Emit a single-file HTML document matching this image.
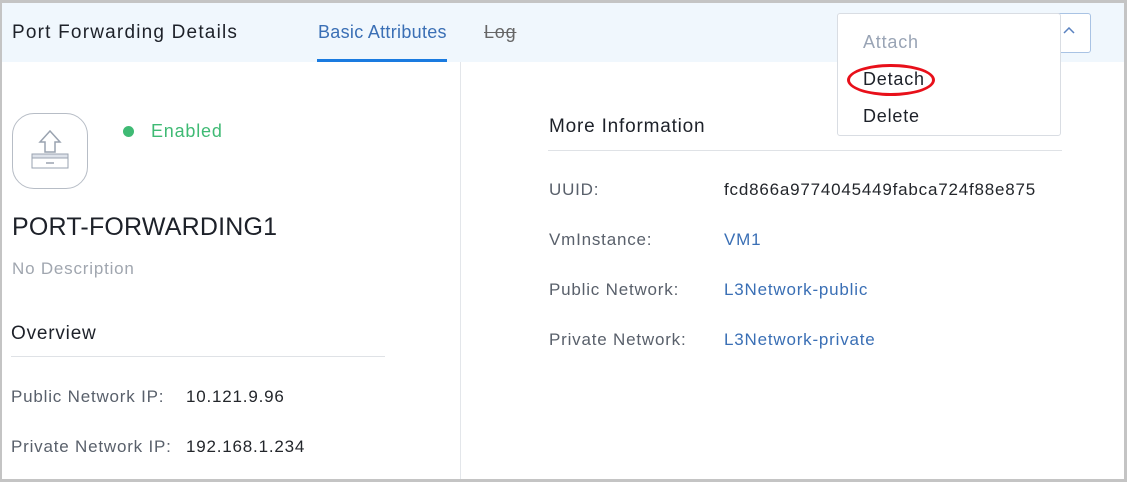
<!DOCTYPE html>
<html><head><style>
*{margin:0;padding:0;box-sizing:border-box}
body{width:1127px;height:482px;overflow:hidden;background:#fff;font-family:"Liberation Sans",sans-serif;position:relative}
.frame{position:absolute;left:0;top:0;width:1127px;height:482px;border:3px solid #c4c4c4;border-left-width:2px}
.hdr{position:absolute;left:2px;top:3px;width:1122px;height:59px;background:#f0f7fd}
.t{position:absolute;white-space:nowrap;letter-spacing:0.8px}
.lbl{color:#59606b;font-size:17px}
.val{color:#23262b;font-size:17px}
.lnk{color:#3a6fb5;font-size:17px}
</style></head><body>
<div class="hdr"></div>
<div class="t" style="left:12px;top:22px;font-size:19px;color:#1d2129;letter-spacing:1.2px">Port Forwarding Details</div>
<div class="t" style="left:318px;top:22px;font-size:18px;color:#3a6fb5;letter-spacing:0.3px">Basic Attributes</div>
<div style="position:absolute;left:317px;top:59px;width:130px;height:3px;background:#1a7be0"></div>
<div class="t" style="left:484px;top:22px;font-size:18px;color:#666;text-decoration:line-through">Log</div>
<div style="position:absolute;left:1050px;top:13px;width:41px;height:40px;border:1px solid #a9c3e4;border-radius:3px;background:#fff"></div>
<svg style="position:absolute;left:1063px;top:27px" width="12" height="8"><path d="M1 6 L6 1 L11 6" fill="none" stroke="#5a82c0" stroke-width="1.5"/></svg>
<div style="position:absolute;left:837px;top:13px;width:224px;height:123px;border:1px solid #d9dde3;border-radius:3px;background:#fff"></div>
<div class="t" style="left:863px;top:32px;font-size:18px;color:#99a4b5">Attach</div>
<div class="t" style="left:863px;top:69px;font-size:18px;color:#1d2129">Detach</div>
<div style="position:absolute;left:847px;top:64px;width:88px;height:32px;border:3px solid #e8101a;border-radius:50%"></div>
<div class="t" style="left:863px;top:106px;font-size:18px;color:#1d2129">Delete</div>
<div style="position:absolute;left:460px;top:62px;width:1px;height:420px;background:#e3e6ea"></div>
<div style="position:absolute;left:12px;top:113px;width:76px;height:76px;border:1.5px solid #b7bdc6;border-radius:22px"></div>
<svg style="position:absolute;left:30px;top:128px" width="40" height="42" viewBox="0 0 40 42"><path d="M20 3 L10 14 H15 V24 H25 V14 H30 Z" fill="none" stroke="#9aa3b0" stroke-width="1.5"/><rect x="2" y="26" width="36" height="4" fill="#dde2ea" stroke="#9aa3b0"/><rect x="2" y="30" width="36" height="10" fill="#fff" stroke="#9aa3b0"/><path d="M16 35 H24" stroke="#9aa3b0" stroke-width="1.5"/></svg>
<div style="position:absolute;left:123px;top:126px;width:11px;height:11px;border-radius:50%;background:#3fba74"></div>
<div class="t" style="left:151px;top:121px;font-size:18px;color:#3fba74">Enabled</div>
<div class="t" style="left:12px;top:213px;font-size:25px;color:#1d2129;letter-spacing:0.2px">PORT-FORWARDING1</div>
<div class="t" style="left:12px;top:259px;font-size:17px;color:#a0a6af">No Description</div>
<div class="t" style="left:11px;top:323px;font-size:19px;color:#1d2129">Overview</div>
<div style="position:absolute;left:11px;top:356px;width:374px;height:1px;background:#dfe2e6"></div>
<div class="t lbl" style="left:11px;top:387px">Public Network IP:</div>
<div class="t val" style="left:186px;top:387px">10.121.9.96</div>
<div class="t lbl" style="left:11px;top:437px">Private Network IP:</div>
<div class="t val" style="left:186px;top:437px">192.168.1.234</div>
<div class="t" style="left:549px;top:116px;font-size:19px;color:#1d2129">More Information</div>
<div style="position:absolute;left:548px;top:150px;width:514px;height:1px;background:#dfe2e6"></div>
<div class="t lbl" style="left:549px;top:180px">UUID:</div>
<div class="t val" style="left:724px;top:180px">fcd866a9774045449fabca724f88e875</div>
<div class="t lbl" style="left:549px;top:230px">VmInstance:</div>
<div class="t lnk" style="left:724px;top:230px">VM1</div>
<div class="t lbl" style="left:549px;top:280px">Public Network:</div>
<div class="t lnk" style="left:724px;top:280px">L3Network-public</div>
<div class="t lbl" style="left:549px;top:330px">Private Network:</div>
<div class="t lnk" style="left:724px;top:330px">L3Network-private</div>
<div class="frame"></div>
</body></html>
